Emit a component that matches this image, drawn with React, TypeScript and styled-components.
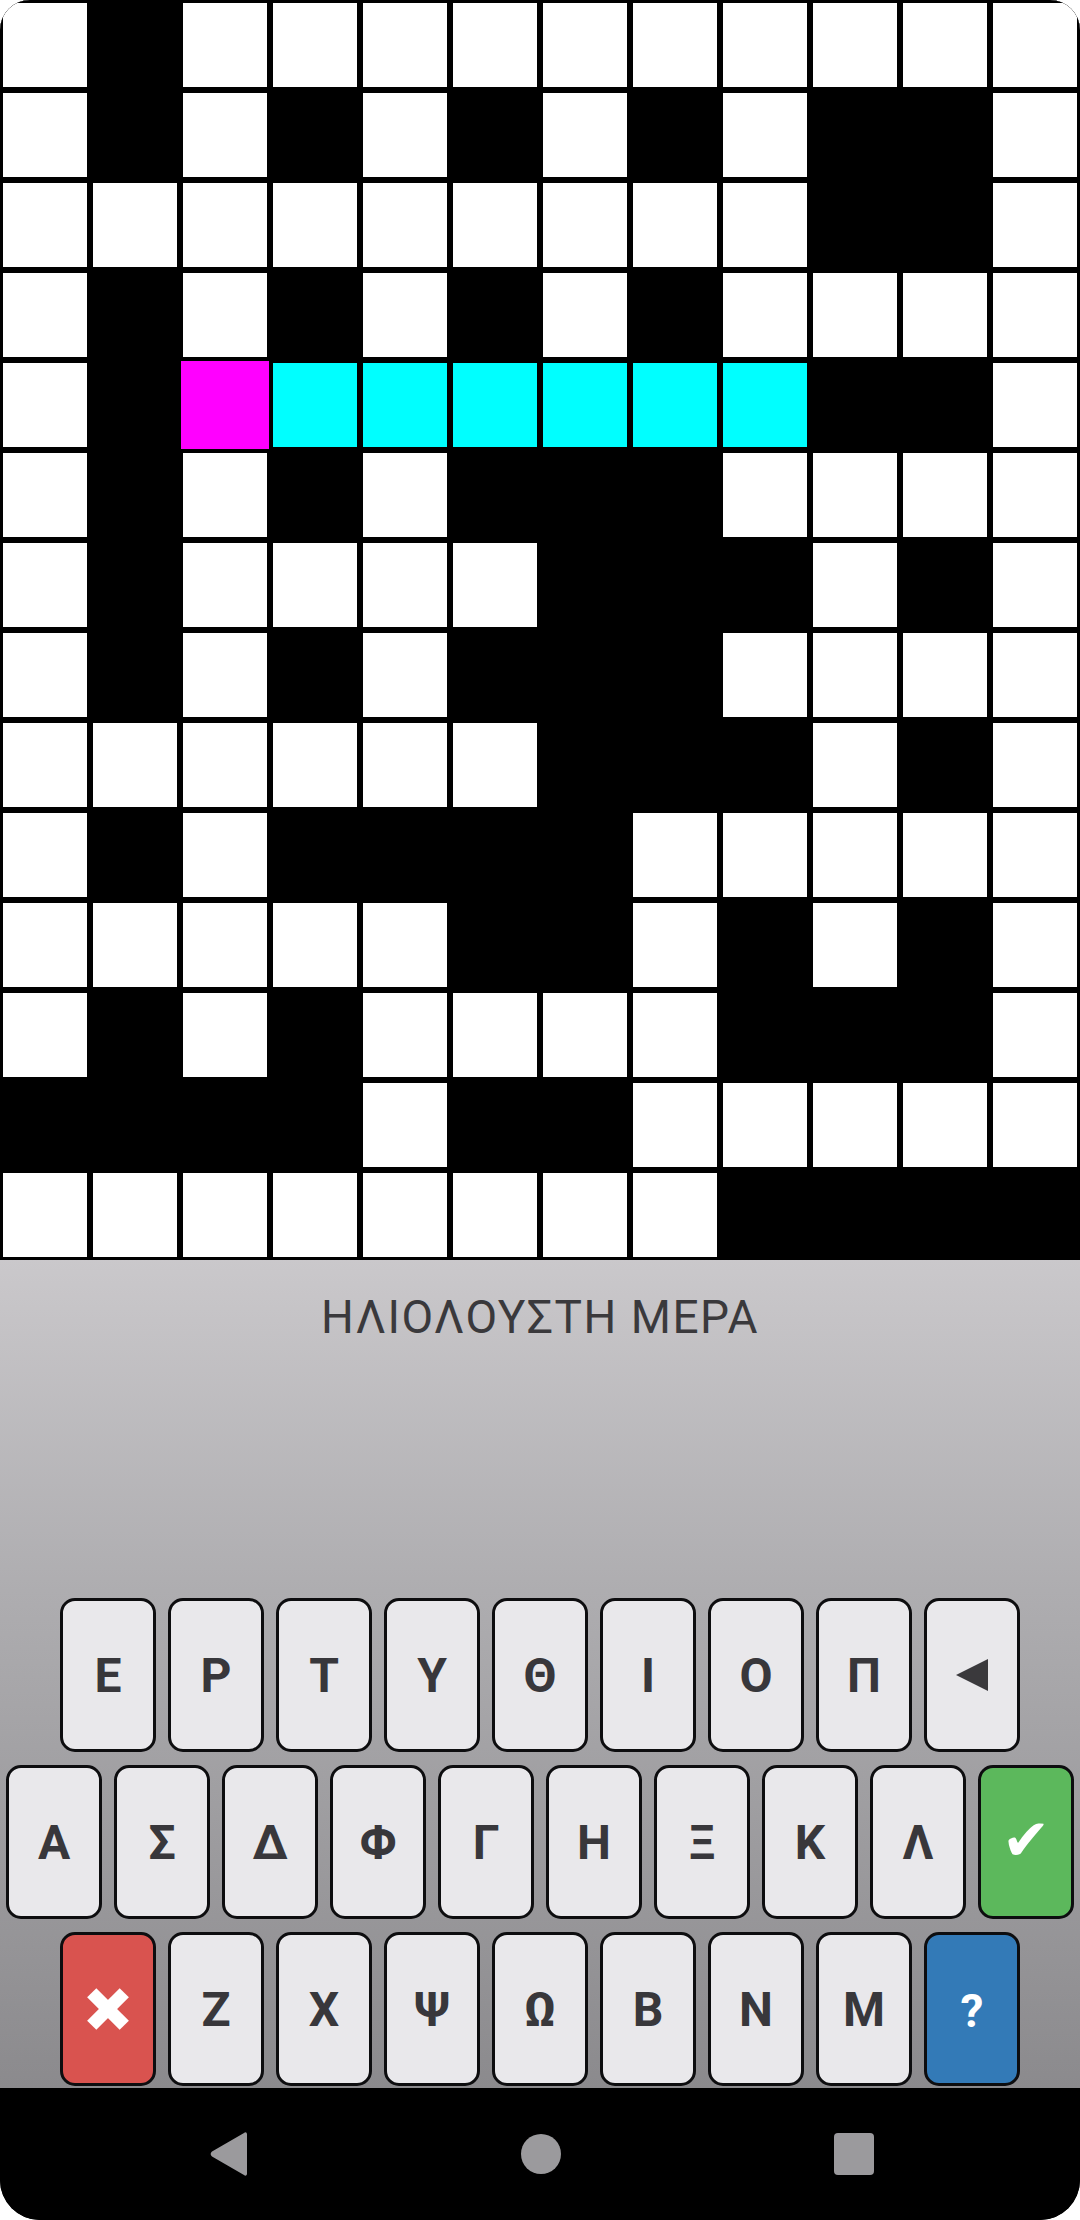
import React from "react";
import styled, { createGlobalStyle } from "styled-components";

const GlobalStyle = createGlobalStyle`
  html, body {
    margin: 0;
    padding: 0;
    background: #ffffff;
  }
  * { box-sizing: border-box; }
`;

const Screen = styled.div`
  width: 1080px;
  height: 2220px;
  display: flex;
  flex-direction: column;
  overflow: hidden;
  border-radius: 30px 30px 40px 40px;
  background: #000;
  font-family: Roboto, "Noto Sans", sans-serif;
`;

const Board = styled.div`
  display: grid;
  grid-template-columns: repeat(12, 90px);
  grid-template-rows: repeat(14, 90px);
  background: #000;
  flex: none;
`;

type CellKind = "." | "#" | "M" | "C";

const cellBg: Record<CellKind, string> = {
  ".": "#ffffff",
  "#": "#000000",
  M: "#ff00ff",
  C: "#00ffff",
};

const Cell = styled.div<{ $kind: CellKind }>`
  background: ${(p) => cellBg[p.$kind]};
  border: ${(p) => (p.$kind === "M" ? "1px" : "3px")} solid #000;
`;

const Panel = styled.div`
  flex: 1;
  display: flex;
  flex-direction: column;
  background: linear-gradient(to bottom, #cac8cb 0%, #aeadb0 40%, #8b8a8d 100%);
  padding-bottom: 2px;
`;

const Clue = styled.div`
  margin-top: 30px;
  text-align: center;
  font-family: Roboto, "Noto Sans", sans-serif;
  font-weight: 400;
  font-size: 46px;
  line-height: 54px;
  letter-spacing: 1.5px;
  color: #3a393c;
`;

const Keyboard = styled.div`
  margin-top: auto;
  display: flex;
  flex-direction: column;
  gap: 13px;
`;

const KeyRow = styled.div`
  display: flex;
  justify-content: center;
  gap: 12px;
`;

type KeyTone = "plain" | "red" | "green" | "blue";

const toneBg: Record<KeyTone, string> = {
  plain: "#e9e8eb",
  red: "#d9534f",
  green: "#5cb85c",
  blue: "#337ab7",
};

const Key = styled.div<{ $tone: KeyTone }>`
  width: 96px;
  height: 154px;
  border: 3px solid #0d0d0f;
  border-radius: 15px;
  background: ${(p) => toneBg[p.$tone]};
  display: flex;
  align-items: center;
  justify-content: center;
  font-family: Roboto, "Noto Sans", sans-serif;
  font-weight: 700;
  font-size: 48px;
  color: ${(p) => (p.$tone === "plain" ? "#38373b" : "#ffffff")};
`;

const Question = styled.span`
  font-size: 46px;
  font-weight: 700;
  margin-top: 4px;
`;

const Check = styled.span`
  font-family: "DejaVu Sans", sans-serif;
  font-weight: 700;
  font-size: 58px;
  line-height: 1;
  margin-top: -4px;
`;

const NavBar = styled.div`
  height: 132px;
  flex: none;
  background: #000;
  display: flex;
  align-items: center;
  justify-content: center;
  gap: 233px;
  padding-left: 2px;
`;

const NavSlot = styled.div`
  width: 80px;
  height: 50px;
  display: flex;
  align-items: center;
  justify-content: center;
`;

const GRID: string[] = [
  ".#..........",
  ".#.#.#.#.##.",
  ".........##.",
  ".#.#.#.#....",
  ".#MCCCCCC##.",
  ".#.#.###....",
  ".#....###.#.",
  ".#.#.###....",
  "......###.#.",
  ".#.####.....",
  ".....##.#.#.",
  ".#.#....###.",
  "####.##.....",
  "........####",
];

const ROW1 = ["Ε", "Ρ", "Τ", "Υ", "Θ", "Ι", "Ο", "Π"];
const ROW2 = ["Α", "Σ", "Δ", "Φ", "Γ", "Η", "Ξ", "Κ", "Λ"];
const ROW3 = ["Ζ", "Χ", "Ψ", "Ω", "Β", "Ν", "Μ"];

const BackIcon = () => (
  <svg width="36" height="36" viewBox="0 0 36 36">
    <polygon points="2,18 34,2 34,34" fill="#3a393c" />
  </svg>
);

const CrossIcon = () => (
  <svg width="42" height="42" viewBox="0 0 42 42">
    <g fill="#fff" transform="rotate(45 21 21)">
      <rect x="14.5" y="-2" width="13" height="46" />
      <rect x="-2" y="14.5" width="46" height="13" />
    </g>
  </svg>
);

const NavBack = () => (
  <svg width="40" height="48" viewBox="0 0 40 48">
    <path
      d="M36 3 C37.5 1.5 39 2.5 39 4.5 L39 43.5 C39 45.5 37.5 46.5 36 45 L4 26.5 C2.2 25.2 2.2 22.8 4 21.5 Z"
      fill="#9b9a9d"
    />
  </svg>
);

const NavHome = () => (
  <svg width="42" height="42" viewBox="0 0 42 42">
    <circle cx="21" cy="21" r="20" fill="#9b9a9d" />
  </svg>
);

const NavRecent = () => (
  <svg width="42" height="44" viewBox="0 0 42 44">
    <rect x="1" y="1" width="40" height="42" rx="4" fill="#9b9a9d" />
  </svg>
);

export default function App() {
  return (
    <>
      <GlobalStyle />
      <Screen>
        <Board>
          {GRID.map((row, r) =>
            row.split("").map((c, i) => <Cell key={`${r}-${i}`} $kind={c as CellKind} />)
          )}
        </Board>
        <Panel>
          <Clue>ΗΛΙΟΛΟΥΣΤΗ ΜΕΡΑ</Clue>
          <Keyboard>
            <KeyRow>
              {ROW1.map((l) => (
                <Key key={l} $tone="plain">{l}</Key>
              ))}
              <Key $tone="plain">
                <BackIcon />
              </Key>
            </KeyRow>
            <KeyRow>
              {ROW2.map((l) => (
                <Key key={l} $tone="plain">{l}</Key>
              ))}
              <Key $tone="green">
                <Check>✔</Check>
              </Key>
            </KeyRow>
            <KeyRow>
              <Key $tone="red">
                <CrossIcon />
              </Key>
              {ROW3.map((l) => (
                <Key key={l} $tone="plain">{l}</Key>
              ))}
              <Key $tone="blue">
                <Question>?</Question>
              </Key>
            </KeyRow>
          </Keyboard>
        </Panel>
        <NavBar>
          <NavSlot>
            <NavBack />
          </NavSlot>
          <NavSlot>
            <NavHome />
          </NavSlot>
          <NavSlot>
            <NavRecent />
          </NavSlot>
        </NavBar>
      </Screen>
    </>
  );
}
